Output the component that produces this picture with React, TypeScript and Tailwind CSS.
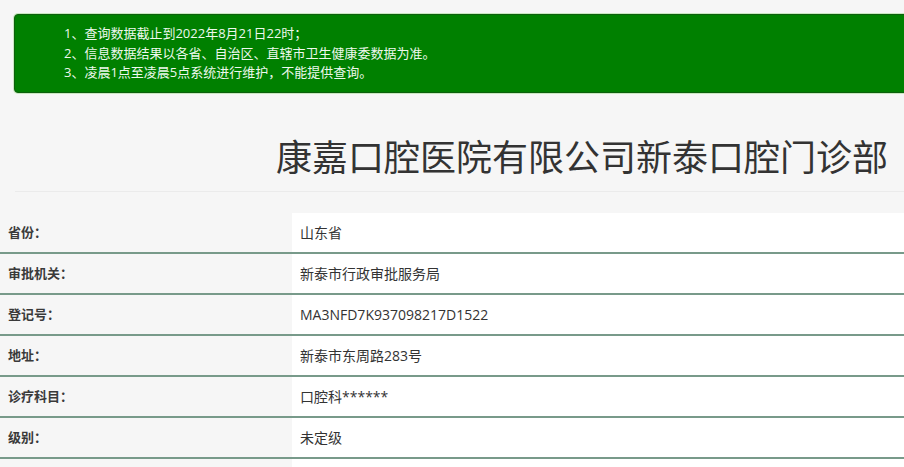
import React from "react";

const notices = [
  "1、查询数据截止到2022年8月21日22时；",
  "2、信息数据结果以各省、自治区、直辖市卫生健康委数据为准。",
  "3、凌晨1点至凌晨5点系统进行维护，不能提供查询。",
];

const rows = [
  { label: "省份：", value: "山东省" },
  { label: "审批机关：", value: "新泰市行政审批服务局" },
  { label: "登记号：", value: "MA3NFD7K937098217D1522" },
  { label: "地址：", value: "新泰市东周路283号" },
  { label: "诊疗科目：", value: "口腔科******" },
  { label: "级别：", value: "未定级" },
  // next row sits below the fold, only its backgrounds show
  { label: "", value: "" },
];

const App = () => {
  return (
    <main
      className="w-[904px] h-[467px] overflow-hidden bg-[#f6f6f6] text-[#333]"
      style={{ fontFamily: '"Open Sans", "Noto Sans CJK SC", sans-serif' }}>
      {/* Notice banner */}
      <section className="pt-[14px] pl-[14px] -mr-[12px]">
        <div className="bg-[#008000] border border-[#0d5f0d] rounded-[4px] py-[9px] pl-[49px] text-[13px] leading-[19.5px] text-[#eef8ee] shadow-[0_0_0_1px_#c9e8c0]">
          {notices.map((n, i) => (
            <p key={i}>{n}</p>
          ))}
        </div>
      </section>

      {/* Title */}
      <section className="ml-[15px] border-b border-[#ebebeb]">
        <h1 className="mt-[38px] mb-[6px] pr-[16px] text-right text-[36px] leading-[54px] font-normal text-[#333]">
          康嘉口腔医院有限公司新泰口腔门诊部
        </h1>
      </section>

      {/* Detail table */}
      <section className="mt-[21px]">
        {rows.map((row, i) => (
          <div
            key={i}
            className="grid grid-cols-[292px_1fr] h-[41px] border-b-2 border-[#789a8a]">
            <div className="flex items-center pl-[8px] pt-[1px] text-[13px] font-bold text-[#3a3a3a]">
              {row.label}
            </div>
            <div className="flex items-center bg-white pl-[8px] text-[14px] text-[#333]">
              {row.value}
            </div>
          </div>
        ))}
      </section>
    </main>
  );
};

export default App;
